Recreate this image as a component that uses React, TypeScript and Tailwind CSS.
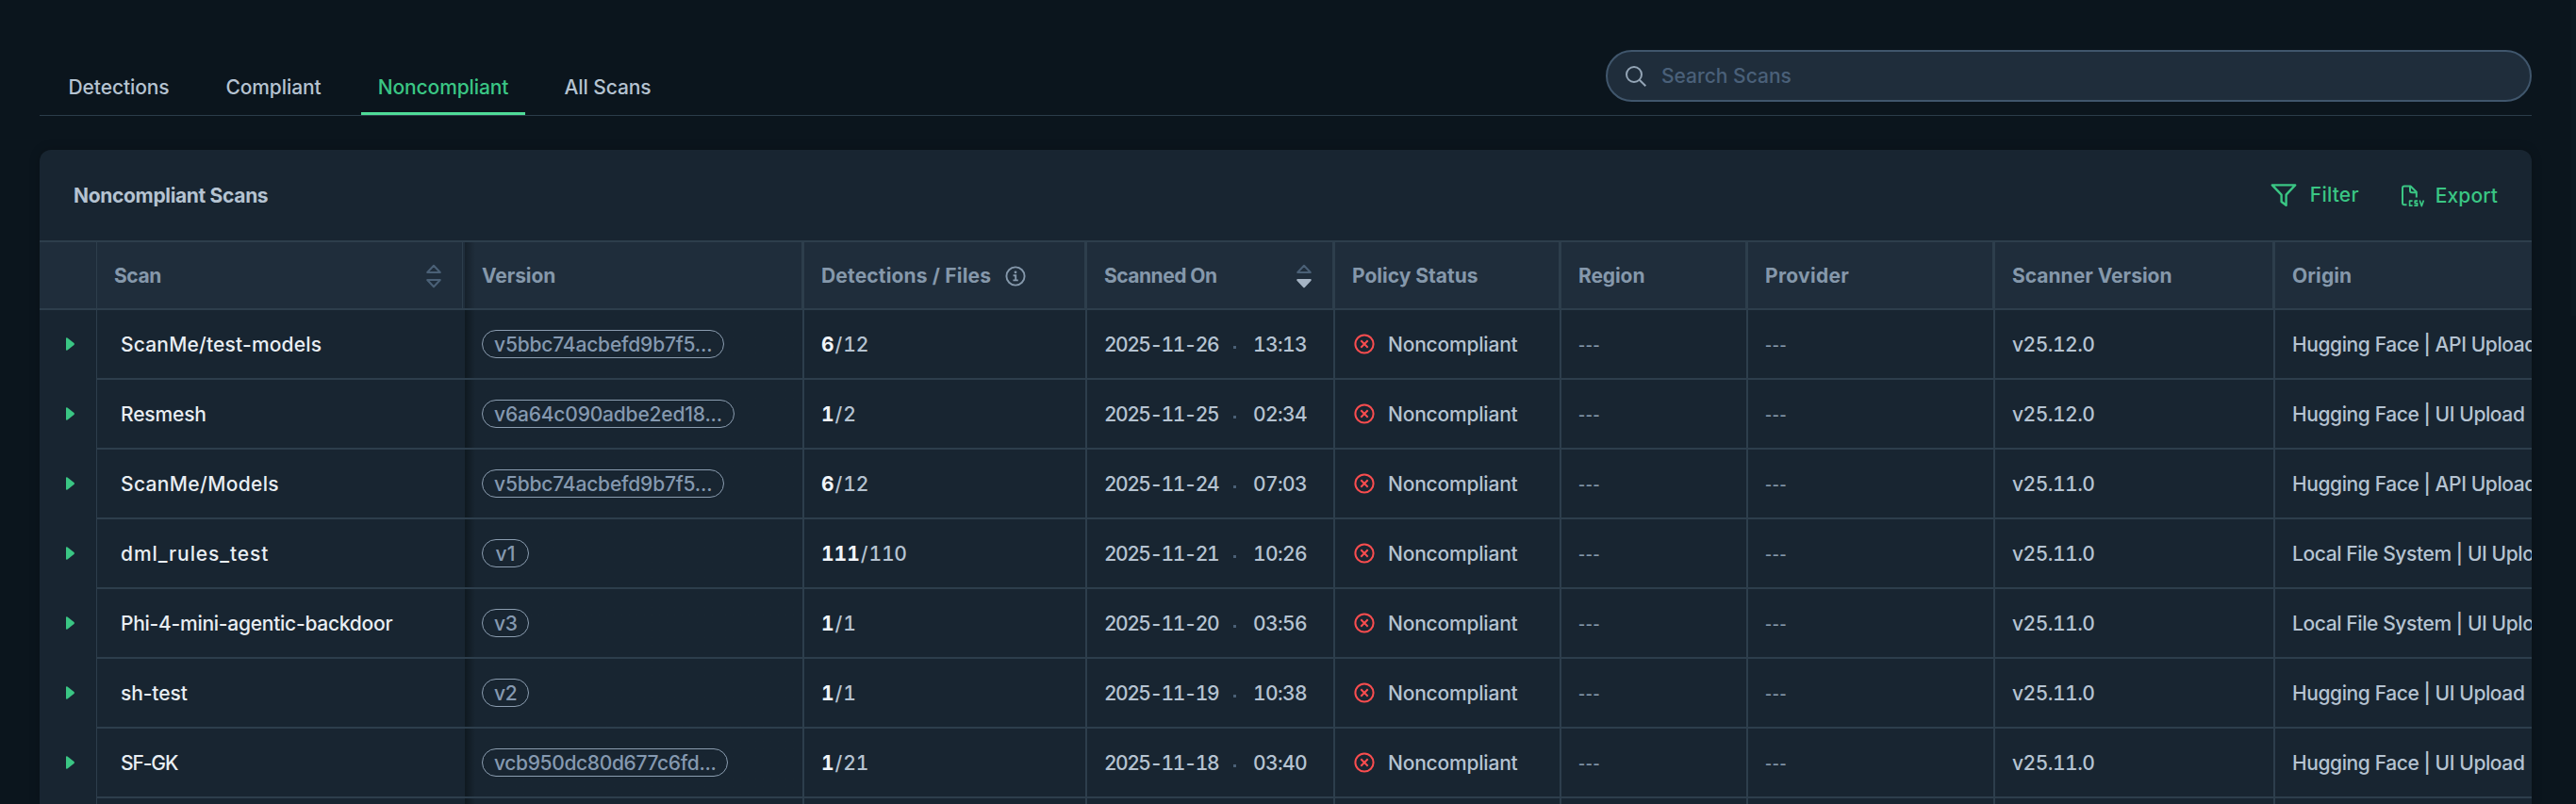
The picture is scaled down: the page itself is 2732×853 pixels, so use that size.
import React from "react";
import clsx from "clsx";

const tabs = [
  { name: "Detections", width: "w-[168px]", active: false },
  { name: "Compliant", width: "w-[160px] mr-[13px]", active: false },
  { name: "Noncompliant", width: "w-[174px]", active: true },
  { name: "All Scans", width: "w-[175px]", active: false },
];

const V5 = "v5bbc74acbefd9b7f5...";

const scans = [
  {
    name: "ScanMe/test-models",
    tracking: "tracking-[0.18px]",
    version: V5,
    versionTracking: "tracking-[-0.18px]",
    detections: "6",
    files: "12",
    date: "2025-11-26",
    time: "13:13",
    scanner: "v25.12.0",
    origin: "Hugging Face | API Upload",
  },
  {
    name: "Resmesh",
    tracking: "tracking-[-0.15px]",
    version: "v6a64c090adbe2ed18...",
    versionTracking: "tracking-[-0.18px]",
    detections: "1",
    files: "2",
    date: "2025-11-25",
    time: "02:34",
    scanner: "v25.12.0",
    origin: "Hugging Face | UI Upload",
  },
  {
    name: "ScanMe/Models",
    tracking: "tracking-[0.35px]",
    version: V5,
    versionTracking: "tracking-[-0.18px]",
    detections: "6",
    files: "12",
    date: "2025-11-24",
    time: "07:03",
    scanner: "v25.11.0",
    origin: "Hugging Face | API Upload",
  },
  {
    name: "dml_rules_test",
    tracking: "tracking-[0.9px]",
    version: "v1",
    versionTracking: "tracking-normal",
    detections: "111",
    files: "110",
    date: "2025-11-21",
    time: "10:26",
    scanner: "v25.11.0",
    origin: "Local File System | UI Upload",
  },
  {
    name: "Phi-4-mini-agentic-backdoor",
    tracking: "tracking-[-0.26px]",
    version: "v3",
    versionTracking: "tracking-[-0.4px]",
    detections: "1",
    files: "1",
    date: "2025-11-20",
    time: "03:56",
    scanner: "v25.11.0",
    origin: "Local File System | UI Upload",
  },
  {
    name: "sh-test",
    tracking: "tracking-[-0.1px]",
    version: "v2",
    versionTracking: "tracking-[-0.4px]",
    detections: "1",
    files: "1",
    date: "2025-11-19",
    time: "10:38",
    scanner: "v25.11.0",
    origin: "Hugging Face | UI Upload",
  },
  {
    name: "SF-GK",
    tracking: "tracking-[-1.1px]",
    version: "vcb950dc80d677c6fd...",
    versionTracking: "tracking-[-0.35px]",
    detections: "1",
    files: "21",
    date: "2025-11-18",
    time: "03:40",
    scanner: "v25.11.0",
    origin: "Hugging Face | UI Upload",
  },
];

const columns =
  "grid grid-cols-[61px_390px_360px_300px_263px_240px_198px_262px_297px_420px]";

function SortIcon({ desc = false }: { desc?: boolean }) {
  return (
    <svg width="18" height="26" viewBox="0 0 18 26" fill="none" strokeWidth="2" strokeLinejoin="round">
      <path d="M9 1.8 L15.8 9 H2.2 Z" stroke="#4a6076" />
      <path
        d="M9 24.2 L15.8 17 H2.2 Z"
        stroke={desc ? "#a5b4c4" : "#4a6076"}
        fill={desc ? "#a5b4c4" : "none"}
      />
    </svg>
  );
}

function InfoIcon() {
  return (
    <svg width="22" height="22" viewBox="0 0 22 22" fill="none" stroke="#8598ab" strokeWidth="1.9">
      <circle cx="11" cy="11" r="9.6" />
      <path d="M8.6 10.2 H11.2 V15.2 M8.4 15.4 H13.8" />
      <circle cx="11" cy="6.8" r="1.4" fill="#8598ab" stroke="none" />
    </svg>
  );
}

function ErrorIcon() {
  return (
    <svg width="22" height="22" viewBox="0 0 22 22" fill="none" stroke="#fa4d4f" strokeWidth="2">
      <circle cx="11" cy="11" r="9.6" />
      <path d="M7.3 7.3 L14.7 14.7 M14.7 7.3 L7.3 14.7" />
    </svg>
  );
}

function SearchIcon() {
  return (
    <svg width="24" height="24" viewBox="0 0 24 24" fill="none" stroke="#94a5b6" strokeWidth="2">
      <circle cx="10" cy="10" r="8" />
      <path d="M15.7 15.7 L22.3 22.3" />
    </svg>
  );
}

function FilterIcon() {
  return (
    <svg width="28" height="26" viewBox="0 0 28 26" fill="none" stroke="#3ac684" strokeWidth="2.4" strokeLinejoin="round">
      <path d="M1.8 2.4 H26.2 L16.6 12.6 V23.8 L11.6 20 V12.6 Z" />
    </svg>
  );
}

function ExportIcon() {
  return (
    <svg width="26" height="26" viewBox="0 0 26 26" fill="none" stroke="#3ac684" strokeWidth="2" strokeLinejoin="round">
      <path d="M6.5 22.2 H4 Q2 22.2 2 20.2 V4.5 Q2 2.5 4 2.5 H10.5 L16.8 8.8 V14.5" />
      <path d="M10 2.8 V7.3 Q10 9.2 12 9.2 H16.5" />
      <path strokeWidth="1.7" d="M12.6 18.2 H9.6 V23.2 H12.6 M18 18.2 H15.2 V20.6 H17.6 V23.2 H14.4 M20.2 17.4 L22.3 23.6 L24.4 17.4" />
    </svg>
  );
}

function HeadCell({ children, className }: { children?: React.ReactNode; className?: string }) {
  return (
    <div className={clsx("flex items-center border-r-[3px] border-[#2d3e4c] pt-px pl-[18px]", className)}>
      {children}
    </div>
  );
}

function Cell({ children, className }: { children?: React.ReactNode; className?: string }) {
  return (
    <div className={clsx("flex items-center border-r-2 border-b-2 border-[#2d3e4c] pt-0.5 pl-[18px]", className)}>
      {children}
    </div>
  );
}

function App() {
  return (
    <div className="relative h-[853px] w-[2732px] overflow-hidden bg-[#0b151d] pr-[47px] pl-[42px] font-['Inter','Liberation_Sans',sans-serif] text-[21px] leading-7 font-[450] text-[#b5c3d1]">
      <div className="flex h-[123px] items-end justify-between border-b border-[#2b3c4a]">
        <div className="flex">
          {tabs.map((tab) => (
            <div
              key={tab.name}
              className={clsx(
                "flex h-[59px] justify-center border-b-[3px] pt-4 tracking-[-0.1px]",
                tab.width,
                tab.active ? "border-[#4fdb98] text-[#3ac684]" : "border-transparent",
              )}
            >
              {tab.name}
            </div>
          ))}
        </div>
        <div className="mb-[14px] flex h-[55px] w-[982px] items-center rounded-[28px] border-2 border-[#40566c] bg-[#1f2d3b] pl-[18px]">
          <SearchIcon />
          <span className="ml-[15px] text-[#4a6079]">Search Scans</span>
        </div>
      </div>

      <div className="mt-9 h-[694px] overflow-hidden rounded-t-xl bg-[#182531] shadow-[0_0_12px_rgba(0,0,0,0.2)]">
        <div className="flex h-24 items-center justify-between pr-9 pl-9">
          <div className="pt-0.5 font-bold tracking-[-0.33px]">Noncompliant Scans</div>
          <div className="flex items-center text-[#3ac684]">
            <FilterIcon />
            <span className="ml-[14px] font-medium tracking-[0.2px]">Filter</span>
            <span className="ml-[44px] pt-0.5">
              <ExportIcon />
            </span>
            <span className="ml-[11px] pt-0.5 font-medium tracking-[0.1px]">Export</span>
          </div>
        </div>

        {/* header row */}
        <div className={clsx(columns, "h-[74px] w-[2791px] border-y-2 border-[#2d3e4c] bg-[#1f2d3b] font-bold text-[#8598ab]")}>
          <div className="border-r border-[#2d3e4c]" />
          <div className="mr-0.5 flex items-center justify-between border-r border-[#2d3e4c] pt-px pr-[21px] pl-[18px]">
            <span className="tracking-[-0.45px]">Scan</span>
            <SortIcon />
          </div>
          <HeadCell className="bg-linear-to-r from-[#16212b] to-[#1f2d3b] to-[11px] tracking-[-0.1px]">Version</HeadCell>
          <HeadCell>
            <span className="mr-[15px] tracking-[0.16px]">Detections / Files</span>
            <InfoIcon />
          </HeadCell>
          <HeadCell className="justify-between pr-[21px]">
            <span className="tracking-[-0.5px]">Scanned On</span>
            <SortIcon desc />
          </HeadCell>
          <HeadCell>Policy Status</HeadCell>
          <HeadCell className="tracking-[-0.1px]">Region</HeadCell>
          <HeadCell className="tracking-[0.3px]">Provider</HeadCell>
          <HeadCell>Scanner Version</HeadCell>
          <HeadCell className="tracking-[0.1px]">Origin</HeadCell>
        </div>

        {scans.map((scan) => (
          <div key={scan.date} className={clsx(columns, "h-[74px] w-[2791px]")}>
            <div className="flex items-center border-r border-[#2d3e4c] pb-[3px] pl-7">
              <svg width="10" height="14" viewBox="0 0 10 14">
                <path d="M0 1 Q0 0 1.5 0.5 L8.5 6 Q9.5 7 8.5 8 L1.5 13.5 Q0 14 0 13 Z" fill="#3ac684" />
              </svg>
            </div>
            <div className={clsx("flex items-center border-b-2 border-[#2d3e4c] pt-0.5 pl-[25px] text-[#e9eef3]", scan.tracking)}>
              {scan.name}
            </div>
            <Cell className="bg-linear-to-r from-[#0f1920] to-[#182531] to-[11px]">
              <div
                className={clsx(
                  "mb-0.5 flex h-[30px] min-w-[50px] items-center justify-center rounded-full border border-[#8b9db0] px-3 pt-px text-[#8599b0]",
                  scan.versionTracking,
                )}
              >
                {scan.version}
              </div>
            </Cell>
            <Cell className="tabular-nums">
              <span className="font-bold text-[#f1f5f9]">{scan.detections}</span>
              <span className="mx-px">/</span>
              <span className="tracking-[-0.2px]">{scan.files}</span>
            </Cell>
            <Cell className="tabular-nums">
              <span className="w-[137px] tracking-[-1.5px]">{scan.date}</span>
              <span className="mt-1 mr-[18px] size-[3px] bg-[#4a6076]" />
              <span className="tracking-[-0.6px]">{scan.time}</span>
            </Cell>
            <Cell>
              <span className="mr-[14px] ml-0.5 pb-[3px]">
                <ErrorIcon />
              </span>
              <span className="tracking-[-0.2px]">Noncompliant</span>
            </Cell>
            <Cell className="font-['Liberation_Sans',sans-serif] tracking-[0.8px] text-[#8598ab]">---</Cell>
            <Cell className="font-['Liberation_Sans',sans-serif] tracking-[0.8px] text-[#8598ab]">---</Cell>
            <Cell className="tracking-[-0.5px] tabular-nums">{scan.scanner}</Cell>
            <Cell className="tracking-[-0.4px]">{scan.origin}</Cell>
          </div>
        ))}
        <div className={clsx(columns, "h-[6px] w-[2791px]")}>
          <div className="border-r border-[#2d3e4c]" />
          <div />
          <div className="border-r-2 border-[#2d3e4c] bg-linear-to-r from-[#0f1920] to-[#182531] to-[11px]" />
          <div className="border-r-2 border-[#2d3e4c]" />
          <div className="border-r-2 border-[#2d3e4c]" />
          <div className="border-r-2 border-[#2d3e4c]" />
          <div className="border-r-2 border-[#2d3e4c]" />
          <div className="border-r-2 border-[#2d3e4c]" />
          <div className="border-r-2 border-[#2d3e4c]" />
        </div>
      </div>

      {/* page scrollbar thumb */}
      <div className="absolute top-0 right-0 h-[335px] w-[5px] bg-[#0d1820]" />
    </div>
  );
}

export default App;
